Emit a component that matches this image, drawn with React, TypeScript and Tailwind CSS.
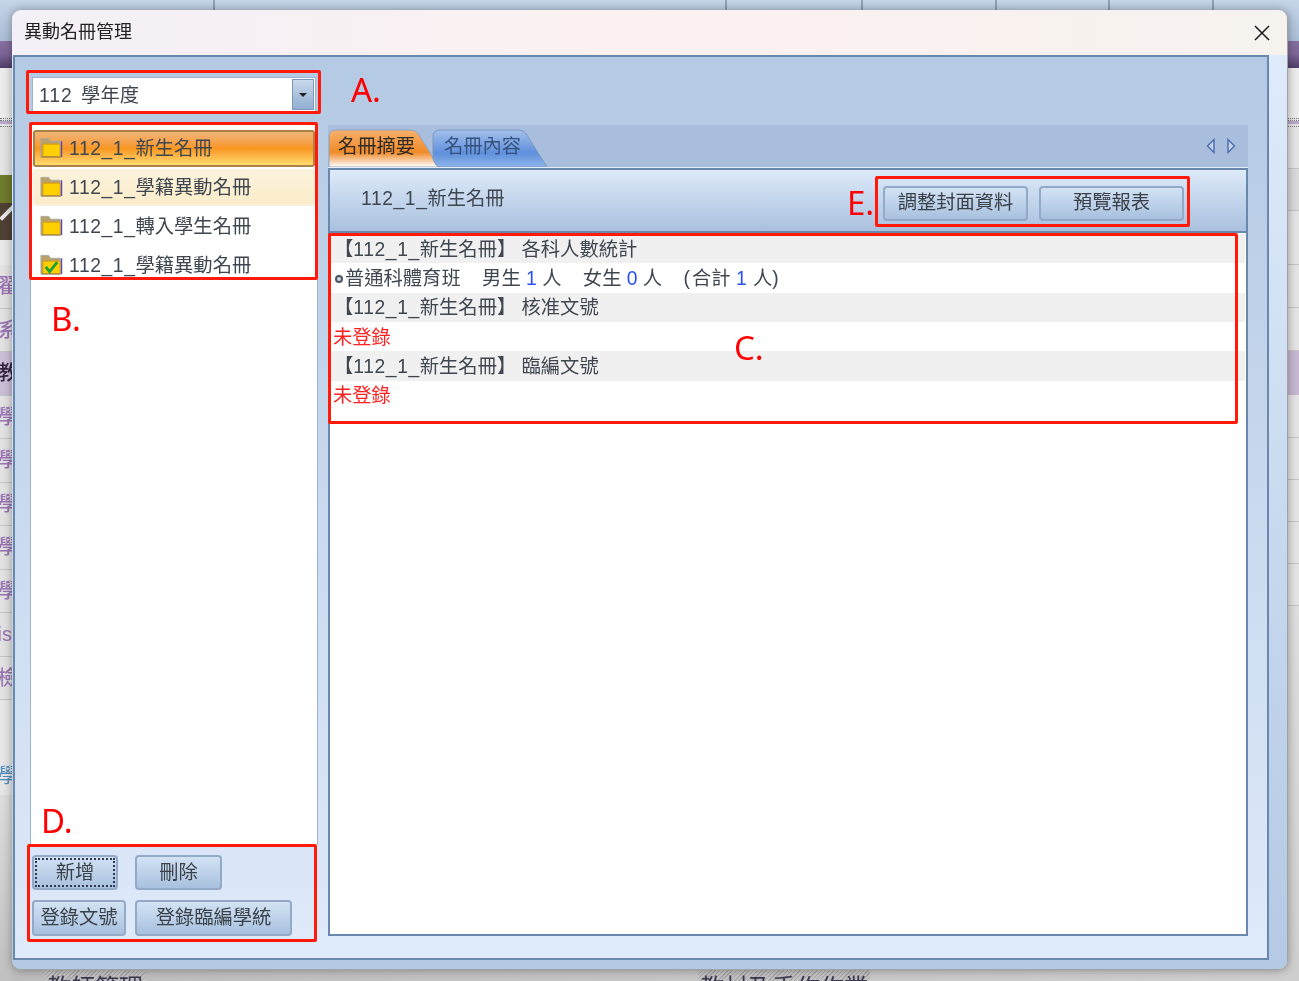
import React from 'react'

const railLeft = [
  { text: '翟', active: false },
  { text: '系', active: false },
  { text: '教', active: true },
  { text: '學', active: false },
  { text: '學', active: false },
  { text: '學', active: false },
  { text: '學', active: false },
  { text: '學', active: false },
  { text: 'is', active: false },
  { text: '檢', active: false },
]

const rosters = [
  { name: '新生名冊', state: 'selected', done: false },
  { name: '學籍異動名冊', state: 'hover', done: false },
  { name: '轉入學生名冊', state: 'none', done: false },
  { name: '學籍異動名冊', state: 'none', done: true },
]

function Folder({ done }: { done: boolean }) {
  return (
    <svg width="23" height="23" viewBox="0 0 24 23" className="-mt-[3px] shrink-0">
      <path d="M1 2h8l2 3h10v16H1z" fill="#b9a26a" stroke="#a8a8a0" strokeWidth="1" />
      <rect x="3" y="8" width="18" height="13" fill="#ffd000" stroke="#d99a10" strokeWidth="1" />
      <path d="M22.5 5v16.5" stroke="#5a45c8" strokeWidth="1.4" />
      <path d="M1 21.5h21" stroke="#8a7a50" strokeWidth="1" />
      {done && <path d="M6 14l4 5 8-10" fill="none" stroke="#22a038" strokeWidth="3" />}
    </svg>
  )
}

function Name({ children }: { children: React.ReactNode }) {
  return (
    <>
      <span className="tracking-[0.6px]">112_1_</span>
      <span>{children}</span>
    </>
  )
}

function Btn({ className, children, focus }: { className: string; children: React.ReactNode; focus?: boolean }) {
  return (
    <div className={`relative flex items-center justify-center rounded-[4px] border-2 border-[#93a9c8] bg-gradient-to-b from-[#d3e2f4] to-[#a8c1df] pt-[1px] text-[#3a4048] ${className}`}>
      {focus && <div className="absolute inset-[1px] border-2 border-dotted border-[#2f3a50]"></div>}
      {children}
    </div>
  )
}

function RedBox({ className }: { className: string }) {
  return <div className={`absolute rounded-[2px] border-[3px] border-[#ff1a0a] ${className}`}></div>
}

function Label({ className, children }: { className: string; children: React.ReactNode }) {
  return <div className={`absolute font-['Noto_Sans',sans-serif] text-[33px] leading-none text-[#ff0000] ${className}`}>{children}</div>
}

function SectionRow({ children }: { children: React.ReactNode }) {
  return <div className="flex h-[29.33px] items-center whitespace-pre bg-[#f0f0f0] pl-[3px] pt-[3px] text-[#3f4650]">{children}</div>
}

function PlainRow({ children, red }: { children: React.ReactNode; red?: boolean }) {
  return <div className={`flex h-[29.33px] items-center whitespace-pre pt-[3px] ${red ? 'pl-[2px] text-[#ff2020]' : 'text-[#3f4650]'}`}>{children}</div>
}

function App() {
  return (
    <div className="relative h-[981px] w-[1299px] overflow-hidden blur-[0.35px] font-['Liberation_Sans','Noto_Sans_CJK_TC',sans-serif] text-[19.3px]">
      {/* page behind the dialog */}
      <div className="flex h-full flex-col bg-[#dcdcdc]">
        <div className="flex h-[41px] shrink-0 bg-gradient-to-b from-[#c6d5e8] to-[#a9bdd6]">
          <div className="w-[215px] border-r-2 border-[#8e9fb6]"></div>
          <div className="w-[512px] border-r-2 border-[#8e9fb6]"></div>
          <div className="w-[136px] border-r-2 border-[#8e9fb6]"></div>
          <div className="w-[134px] border-r-2 border-[#8e9fb6]"></div>
          <div className="w-[113px] border-r-2 border-[#8e9fb6]"></div>
          <div className="w-[104px] border-r-2 border-[#8e9fb6]"></div>
        </div>
        <div className="h-[27px] shrink-0 bg-gradient-to-b from-[#85709f] via-[#7b6496] to-[#4f3f66]"></div>
        <div className="flex flex-1">
          <div className="flex w-[12px] flex-col bg-[#e6e6e6]">
            <div className="h-[50px] bg-[#ececec]"></div>
            <div className="h-[3px] border-y border-dotted border-[#777]"></div>
            <div className="h-[3px] bg-[#b9a9c9]"></div>
            <div className="h-[3px] border-b border-dotted border-[#777]"></div>
            <div className="h-[48px] bg-[#e4e4e4]"></div>
            <div className="relative h-[65px] overflow-hidden bg-[#4f4034]">
              <div className="h-[28px] bg-[#6f7a2c]"></div>
              <div className="absolute left-[-2px] top-[36px] h-[4px] w-[18px] -rotate-45 bg-[#e8e8e8]"></div>
            </div>
            <div className="h-[25px] bg-[#e9e9e9]"></div>
            {railLeft.map((item, i) => (
              <div
                key={i}
                className={`flex h-[43.5px] items-center justify-end overflow-hidden border-b border-[#c4c4c4] text-[20px] font-medium ${item.active ? 'bg-[#cbbdd5] text-[#33233f]' : 'bg-[#e2e2e2] text-[#9a74b4]'}`}
              >
                <span className={item.text === 'is' ? 'shrink-0' : 'shrink-0 -mr-[6px]'}>{item.text}</span>
              </div>
            ))}
            <div className="flex h-[95px] items-end justify-end overflow-hidden pb-[4px] text-[20px] text-[#4d8cc0]">
              <span className="shrink-0 -mr-[6px]">學</span>
            </div>
            <div className="flex-1 bg-gradient-to-b from-[#dcdcdc] to-[#c0c0c0]"></div>
          </div>
          <div className="flex-1 bg-gradient-to-r from-[#bcbcbc] to-[#cfcfcf]"></div>
          <div className="flex w-[11px] flex-col bg-[#e4e4e4]">
            <div className="h-[50px] bg-[#ececec]"></div>
            <div className="h-[3px] border-y border-dotted border-[#777]"></div>
            <div className="h-[3px] bg-[#b9a9c9]"></div>
            <div className="h-[3px] border-b border-dotted border-[#777]"></div>
            <div className="h-[42px] border-b border-[#c4c4c4]"></div>
            <div className="h-[42px] border-b border-[#c4c4c4] bg-[#dadada]"></div>
            <div className="h-[54px] border-b border-[#c4c4c4]"></div>
            <div className="h-[43px] border-b border-[#c4c4c4]"></div>
            <div className="h-[43px] border-b border-[#c4c4c4]"></div>
            <div className="h-[44px] bg-[#c6b8d2]"></div>
            <div className="h-[43px] border-b border-[#c4c4c4]"></div>
            <div className="h-[42px] border-b border-[#c4c4c4]"></div>
            <div className="h-[42px] border-b border-[#c4c4c4]"></div>
            <div className="h-[42px] border-b border-[#c4c4c4]"></div>
            <div className="h-[42px] border-b border-[#c4c4c4]"></div>
            <div className="flex-1 bg-gradient-to-b from-[#dedede] to-[#cfcfcf]"></div>
          </div>
        </div>
      </div>

      {/* clipped headings below the dialog */}
      <div className="absolute left-[45px] top-[970px] h-[11px] w-[100px] bg-[repeating-linear-gradient(135deg,#a8a8a8_0px,#a8a8a8_1px,#c4c4c4_1px,#c4c4c4_3px)]"></div>
      <div className="absolute left-[698px] top-[970px] h-[11px] w-[172px] bg-[repeating-linear-gradient(135deg,#a8a8a8_0px,#a8a8a8_1px,#c4c4c4_1px,#c4c4c4_3px)]"></div>
      <div className="absolute left-[47px] top-[976px] text-[24px] leading-none text-[#3a3550]">教師管理</div>
      <div className="absolute left-[700px] top-[976px] text-[24px] leading-none text-[#3a3550]">教材及手作作業</div>

      {/* dialog */}
      <div className="absolute left-[12px] top-[10px] flex h-[960px] w-[1276px] flex-col overflow-hidden rounded-[9px] border-r border-b border-[#a2a2a2] shadow-[0_0_10px_rgba(0,0,0,0.35)]">
        <div className="flex h-[45px] shrink-0 items-center justify-between bg-gradient-to-r from-[#f4f0f7] via-[#fbf1f0] to-[#f6f2ee] pl-[12px] pr-[16px] text-[18px] text-[#222]">
          <span>異動名冊管理</span>
          <svg width="18" height="18" viewBox="0 0 18 18">
            <path d="M2 2l14 14M16 2L2 16" stroke="#1a1a1a" strokeWidth="1.5" />
          </svg>
        </div>

        <div className="flex min-h-0 flex-1 bg-gradient-to-b from-[#dfebfb] to-[#b4c9e4] pb-[9px] pl-[1px] pr-[18px]">
          <div className="flex min-w-0 flex-1 gap-[10px] border-2 border-t-2 border-[#6a87ad] bg-gradient-to-b from-[#b4c9e3] to-[#dfeafa] pl-[15px] pr-[19px]">
            {/* left column */}
            <div className="flex w-[288px] shrink-0 flex-col pb-[22px] pt-[20px]">
              <div className="ml-[2px] flex h-[35px] w-[284px] shrink-0 items-center justify-between border border-[#9db3cf] bg-white pl-[6px] pr-[1px] text-[#3f4650]">
                <span className="flex whitespace-pre pt-[3px]">
                  <span className="tracking-[1px]">112 </span>
                  <span className="ml-[2px]">學年度</span>
                </span>
                <div className="flex h-[31px] w-[22px] items-center justify-center border border-[#7d97ba] bg-gradient-to-b from-[#c8d9ec] to-[#92aed1]">
                  <svg width="8" height="4" viewBox="0 0 8 4">
                    <path d="M0 0h8L4 4z" fill="#222" />
                  </svg>
                </div>
              </div>

              <div className="mt-[12px] flex min-h-0 flex-1 flex-col gap-[2px] border-x border-t border-[#9db3cf] bg-white px-[2px] pt-[5px] text-[#3f4650]">
                {rosters.map((r, i) => (
                  <div
                    key={i}
                    className={`flex h-[37px] shrink-0 items-center rounded-[3px] border-2 pl-[5px] ${
                      r.state === 'selected'
                        ? 'border-[#a98345] bg-gradient-to-b from-[#f0b476] via-[#f8961e] to-[#ffdc6c]'
                        : r.state === 'hover'
                          ? 'border-[#faf1dd] bg-gradient-to-b from-[#fcf3dd] to-[#fbedc9]'
                          : 'border-transparent'
                    }`}
                  >
                    <Folder done={r.done} />
                    <span className="ml-[6px] pt-[2px]">
                      <Name>{r.name}</Name>
                    </span>
                  </div>
                ))}
              </div>

              <div className="ml-[2px] mt-[10px] flex shrink-0 flex-col gap-[10px]">
                <div className="flex">
                  <Btn className="h-[35px] w-[86px]" focus>新增</Btn>
                  <Btn className="ml-[17px] h-[35px] w-[87px]">刪除</Btn>
                </div>
                <div className="flex">
                  <Btn className="h-[36px] w-[94px]">登錄文號</Btn>
                  <Btn className="ml-[9px] h-[36px] w-[157px]">登錄臨編學統</Btn>
                </div>
              </div>
            </div>

            {/* right column */}
            <div className="flex min-w-0 flex-1 flex-col pb-[22px] pt-[68px]">
              <div className="relative flex h-[43px] shrink-0 items-end border-b border-[#e8eef8] bg-[#a9bedc]">
                <div className="relative h-[38px] w-[112px] text-[#2e2a26]">
                  <svg width="112" height="38" viewBox="0 0 112 38" className="absolute inset-0">
                    <defs>
                      <linearGradient id="tabOn" x1="0" y1="0" x2="0" y2="1">
                        <stop offset="0" stopColor="#f6b06c" />
                        <stop offset="0.6" stopColor="#f08a28" />
                        <stop offset="1" stopColor="#ffffff" />
                      </linearGradient>
                    </defs>
                    <path d="M1 38V8Q1 1 8 1H82Q88 1 91 6L111 38Z" fill="url(#tabOn)" stroke="#8ea6c6" strokeWidth="1" />
                  </svg>
                  <span className="absolute left-[10px] top-[4px]">名冊摘要</span>
                </div>
                <div className="relative -ml-[8px] h-[38px] w-[116px] text-[#35527e]">
                  <svg width="116" height="38" viewBox="0 0 116 38" className="absolute inset-0">
                    <defs>
                      <linearGradient id="tabOff" x1="0" y1="0" x2="0" y2="1">
                        <stop offset="0" stopColor="#a3c0ea" />
                        <stop offset="0.62" stopColor="#5f90dc" />
                        <stop offset="1" stopColor="#8fb4ea" />
                      </linearGradient>
                    </defs>
                    <path d="M1 30V8Q1 1 8 1H86Q92 1 95 6L115 38H8Q4 38 1 30Z" fill="url(#tabOff)" stroke="#7d97c0" strokeWidth="1" />
                  </svg>
                  <span className="absolute left-[12px] top-[4px]">名冊內容</span>
                </div>
                <svg width="30" height="16" viewBox="0 0 30 16" className="absolute right-[12px] top-[13px]">
                  <path d="M8 1.5L1.5 8 8 14.5z" fill="#c3d3ea" stroke="#4a6bb0" strokeWidth="1.4" />
                  <path d="M22 1.5L28.5 8 22 14.5z" fill="#c3d3ea" stroke="#4a6bb0" strokeWidth="1.4" />
                </svg>
              </div>

              <div className="flex h-[65px] shrink-0 items-center justify-between border-2 border-[#6a87ad] bg-gradient-to-b from-[#deeafa] to-[#a9c1df] pl-[31px] pr-[62px] text-[#3f4650]">
                <span className="-mt-[3px]">
                  <Name>新生名冊</Name>
                </span>
                <div className="mt-[5px] flex gap-[11px]">
                  <Btn className="h-[35px] w-[145px]">調整封面資料</Btn>
                  <Btn className="h-[35px] w-[145px]">預覽報表</Btn>
                </div>
              </div>

              <div className="flex min-h-0 flex-1 flex-col border-x-2 border-b-2 border-[#6a87ad] bg-white px-[1px] pt-[1px]">
                <SectionRow>【<Name>新生名冊</Name>】 各科人數統計</SectionRow>
                <PlainRow>
                  <span className="mx-[2px] ml-[4px] inline-block h-[8px] w-[8px] rounded-full border-2 border-[#4a5560] bg-[#cfd8e4]"></span>
                  <span>普通科體育班    男生 </span>
                  <span className="text-[#2a4ff0]">1</span>
                  <span> 人    女生 </span>
                  <span className="text-[#2a4ff0]">0</span>
                  <span> 人    (</span>
                  <span className="ml-[2px]">合計 </span>
                  <span className="text-[#2a4ff0]">1</span>
                  <span className="ml-[1px]"> 人)</span>
                </PlainRow>
                <SectionRow>【<Name>新生名冊</Name>】 核准文號</SectionRow>
                <PlainRow red>未登錄</PlainRow>
                <SectionRow>【<Name>新生名冊</Name>】 臨編文號</SectionRow>
                <PlainRow red>未登錄</PlainRow>
              </div>
            </div>
          </div>
        </div>
      </div>

      {/* annotations */}
      <RedBox className="left-[26px] top-[70px] h-[44px] w-[295px]" />
      <RedBox className="left-[29px] top-[122px] h-[158px] w-[289px]" />
      <RedBox className="left-[328px] top-[233px] h-[191px] w-[910px]" />
      <RedBox className="left-[27px] top-[844px] h-[98px] w-[290px]" />
      <RedBox className="left-[875px] top-[176px] h-[51px] w-[315px]" />
      <Label className="left-[351px] top-[73px]">A.</Label>
      <Label className="left-[51px] top-[302px]">B.</Label>
      <Label className="left-[734px] top-[331px]">C.</Label>
      <Label className="left-[41px] top-[804px]">D.</Label>
      <Label className="left-[847px] top-[186px]">E.</Label>
    </div>
  )
}

export default App
